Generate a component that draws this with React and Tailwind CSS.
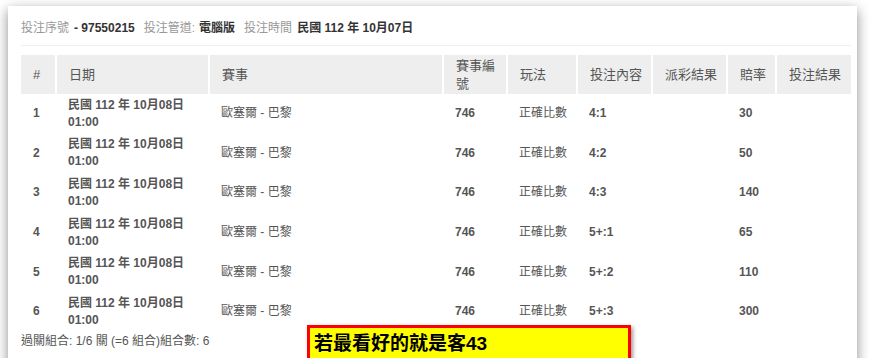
const rows = [
  { no: 1, pick: '4:1', odds: '30' },
  { no: 2, pick: '4:2', odds: '50' },
  { no: 3, pick: '4:3', odds: '140' },
  { no: 4, pick: '5+:1', odds: '65' },
  { no: 5, pick: '5+:2', odds: '110' },
  { no: 6, pick: '5+:3', odds: '300' },
]

const headers = ['#', '日期', '賽事', '賽事編號', '玩法', '投注內容', '派彩結果', '賠率', '投注結果']
const widths = ['w-[35px]', 'w-[153px]', 'w-[234px]', 'w-[64px]', 'w-[70px]', 'w-[75px]', 'w-[75px]', 'w-[49px]', 'w-[75px]']

export default function App() {
  return (
    <div
      className="min-h-screen bg-white overflow-hidden text-[#555]"
      style={{ fontFamily: '"Liberation Sans", Arial, "Noto Sans CJK TC", sans-serif' }}
    >
      <div className="relative ml-[8px] mt-[6px] w-[849px] min-h-[400px] bg-white shadow-[0_4px_12px_rgba(0,0,0,0.45)] px-[13px] pt-[13px]">
        {/* 投注資訊 */}
        <div className="w-[830px] text-[12px] leading-[18px] pb-[8px] border-b border-[#eee] flex">
          <span className="text-[#999]">投注序號</span>
          <span className="font-bold text-[#333] ml-[5px]">- 97550215</span>
          <span className="text-[#999] ml-[9px]">投注管道:</span>
          <span className="font-bold text-[#333] ml-[4px]">電腦版</span>
          <span className="text-[#999] ml-[9px]">投注時間</span>
          <span className="font-bold text-[#333] ml-[5px]">民國 112 年 10月07日</span>
        </div>

        {/* 投注明細 */}
        <table className="mt-[9px] w-[830px] table-fixed border-collapse">
          <thead>
            <tr className="bg-[#eee] h-[39px]">
              {headers.map((h, i) => (
                <th
                  key={h}
                  className={`${widths[i]} pl-3 pr-[6px] text-left font-normal text-[13px] leading-[18px] align-middle border-x-2 border-white first:border-l-0 last:border-r-0`}
                >
                  {h}
                </th>
              ))}
            </tr>
          </thead>
          <tbody className="text-[12px] leading-[17px] whitespace-nowrap">
            {rows.map((r) => (
              <tr key={r.no} className="h-[39.6px]">
                <td className="pl-3 font-bold">{r.no}</td>
                <td className="pl-3 font-bold">
                  民國 112 年 10月08日
                  <br />
                  01:00
                </td>
                <td className="pl-3">歐塞爾 - 巴黎</td>
                <td className="pl-3 font-bold">746</td>
                <td className="pl-3">正確比數</td>
                <td className="pl-3 font-bold">{r.pick}</td>
                <td className="pl-3"></td>
                <td className="pl-3 font-bold">{r.odds}</td>
                <td className="pl-3"></td>
              </tr>
            ))}
          </tbody>
        </table>

        <div className="text-[12px] leading-[17px] mt-[1px]">過關組合: 1/6 關 (=6 組合)組合數: 6</div>

        {/* 註解 */}
        <div className="absolute left-[299px] top-[319px] w-[324px] h-[42px] bg-[#ff0] border-[3px] border-[#f00] shadow-[2px_2px_4px_rgba(0,0,0,0.4)] pl-[4px] pt-[3px] text-black font-bold text-[19px] leading-[26px]">
          若最看好的就是客43
        </div>
      </div>
    </div>
  )
}
